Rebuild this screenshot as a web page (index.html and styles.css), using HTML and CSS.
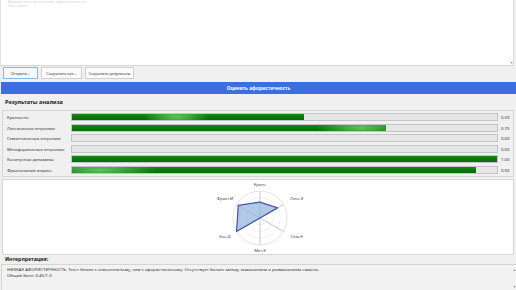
FILE: index.html
```html
<!DOCTYPE html>
<html lang="ru">
<head>
<meta charset="utf-8">
<title>Анализ афористичности</title>
<link rel="stylesheet" href="styles.css">
</head>
<body>
<div class="app">
  <div class="editor">
    <div class="editor-text">
      <p>Введите текст для анализа афористичности…</p>
      <p>Текст здесь</p>
    </div>
    <div class="vscroll"><span class="arrow">▾</span></div>
  </div>

  <div class="toolbar">
    <button class="btn btn-open focused">Открыть...</button>
    <button class="btn btn-saveas">Сохранить как...</button>
    <button class="btn btn-saveres">Сохранить результаты</button>
  </div>

  <button class="primary">Оценить афористичность</button>

  <div class="section-title results-title">Результаты анализа</div>

  <div class="metrics">
    <div class="label">Краткость:</div>
    <div class="track"><div class="fill" style="width:54.6%; --glow:45%"></div></div>
    <div class="value">0.59</div>

    <div class="label">Лексическая энтропия:</div>
    <div class="track"><div class="fill" style="width:73.8%; --glow:92%"></div></div>
    <div class="value">0.75</div>

    <div class="label">Семантическая энтропия:</div>
    <div class="track"><div class="fill" style="width:0%"></div></div>
    <div class="value">0.00</div>

    <div class="label">Метафорическая энтропия:</div>
    <div class="track"><div class="fill" style="width:0%"></div></div>
    <div class="value">0.00</div>

    <div class="label">Косинусная динамика:</div>
    <div class="track"><div class="fill" style="width:100%; --glow:-20%"></div></div>
    <div class="value">1.00</div>

    <div class="label">Фрактальный индекс:</div>
    <div class="track"><div class="fill" style="width:95%; --glow:7%"></div></div>
    <div class="value">0.93</div>
  </div>

  <div class="chart">
    <svg class="radar" width="510" height="74" viewBox="0 0 510 74">
      <g fill="none" stroke="#ececec" stroke-width="0.8">
        <circle cx="257" cy="38" r="6.75"/>
        <circle cx="257" cy="38" r="13.5"/>
        <circle cx="257" cy="38" r="20.25"/>
      </g>
      <circle cx="257" cy="38" r="27" fill="none" stroke="#e0e0e0" stroke-width="0.9"/>
      <g stroke="#c9c9c9" stroke-width="1">
        <line x1="257" y1="38" x2="257" y2="11"/>
        <line x1="257" y1="38" x2="280.38" y2="24.5"/>
        <line x1="257" y1="38" x2="280.38" y2="51.5"/>
        <line x1="257" y1="38" x2="257" y2="65"/>
        <line x1="257" y1="38" x2="233.62" y2="51.5"/>
        <line x1="257" y1="38" x2="233.62" y2="24.5"/>
      </g>
      <polygon points="257,22.07 274.54,27.88 257,38 257,38 233.62,51.5 235.25,25.44"
               fill="#8fb3de" fill-opacity="0.7" stroke="#4a58a6" stroke-width="1.3" stroke-linejoin="round"/>
      <g class="axis-label" text-anchor="middle" dominant-baseline="central">
        <text x="257" y="4">Кратк.</text>
        <text x="293.7" y="18">Лекс.Э</text>
        <text x="293.7" y="56.3">Сем.Э</text>
        <text x="257" y="70">Мет.Э</text>
        <text x="222" y="56.3">Кос.Д</text>
        <text x="222" y="18">Фракт.И</text>
      </g>
    </svg>
  </div>

  <div class="section-title interp-title">Интерпретация:</div>

  <div class="interp">
    <div class="interp-text">
      <p>НИЗКАЯ АФОРИСТИЧНОСТЬ. Текст ближе к описательному, чем к афористическому. Отсутствует баланс между замыканием и размыканием смысла.</p>
      <p>Общий балл: 0.45/1.0</p>
    </div>
    <div class="vscroll interp-scroll"><span class="arrow">▴</span><span class="arrow">▾</span></div>
  </div>
</div>
</body>
</html>
```

FILE: styles.css
```css
html, body {
  margin: 0;
  padding: 0;
}

body {
  width: 516px;
  height: 290px;
  overflow: hidden;
  background: #f0f0f0;
  font-family: "Noto Sans", "Open Sans", "DejaVu Sans", sans-serif;
  color: #1a1a1a;
}

.app {
  display: flex;
  flex-direction: column;
  width: 516px;
  height: 290px;
}

p { margin: 0; }

/* top text editor */
.editor {
  display: flex;
  height: 65px;
  background: #ffffff;
  border-left: 1px solid #e2e2e2;
  border-bottom: 1px solid #d4d4d4;
  margin-right: 2px;
  border-right: 1px solid #dcdcdc;
}

.editor-text {
  flex: 1;
  padding: 0 7px;
  font-size: 3.6px;
  line-height: 3.8px;
  color: #d2d2d2;
  overflow: hidden;
}

.vscroll {
  width: 3px;
  display: flex;
  flex-direction: column;
  justify-content: flex-end;
  align-items: center;
}

.arrow {
  font-size: 4px;
  line-height: 4px;
  color: #8a8a8a;
}

/* toolbar */
.toolbar {
  display: flex;
  gap: 3px;
  padding: 1px 3px 3px;
}

.btn {
  height: 12px;
  margin: 0;
  padding: 0;
  background: #fbfbfb;
  border: 1px solid #cfcfcf;
  border-radius: 0;
  font-family: inherit;
  font-size: 3.9px;
  color: #333;
  white-space: nowrap;
  text-align: center;
}

.btn-open { width: 35px; }
.btn-saveas { width: 41px; }
.btn-saveres { width: 49px; }

.btn.focused {
  background: #f4f9fe;
  border-color: #8ab8e6;
}

.primary {
  display: block;
  height: 12px;
  margin: 0 0 0 1px;
  padding: 0;
  border: none;
  background: #3d6de0;
  color: #ffffff;
  font-family: inherit;
  font-size: 4.8px;
  font-weight: 700;
  text-align: center;
}

.section-title {
  font-weight: 700;
  font-size: 5.6px;
  padding-left: 5px;
  color: #222;
}

.results-title {
  height: 16px;
  line-height: 17px;
}

/* metrics */
.metrics {
  margin: 0 2px;
  border: 1px solid #d6d6d6;
  padding: 2px 2px 2px 4px;
  display: grid;
  grid-template-columns: 64px 427px auto;
  column-gap: 0;
  row-gap: 2.6px;
  align-items: center;
  height: 61px;
  box-sizing: content-box;
}

.label {
  font-size: 4.3px;
  color: #333;
  white-space: nowrap;
}

.value {
  font-size: 4.3px;
  color: #333;
  padding-left: 3px;
}

.track {
  height: 8px;
  box-sizing: border-box;
  border: 1px solid #c4c4c4;
  background: #e6e6e6;
  overflow: hidden;
}

.fill {
  height: 100%;
  background:
    radial-gradient(ellipse 14% 160% at var(--glow, -50%) 50%, rgba(120, 220, 120, 0.75), rgba(120, 220, 120, 0) 100%),
    linear-gradient(#188818, #0c750c 55%, #0a6e0a);
}

/* chart */
.chart {
  margin: 2px 2px 0;
  height: 74px;
  background: #ffffff;
  border: 1px solid #d6d6d6;
}

.radar {
  display: block;
}

.axis-label {
  font-family: "Noto Sans", "Open Sans", sans-serif;
  font-size: 4.2px;
  fill: #444;
}

.interp-title {
  height: 9px;
  line-height: 9px;
  font-size: 5.2px;
}

/* interpretation */
.interp {
  flex: 1;
  display: flex;
  margin-left: 1px;
  border-top: 1px solid #d4d4d4;
  border-left: 1px solid #d4d4d4;
  background: #f2f2f2;
}

.interp-text {
  flex: 1;
  padding: 2px 5px;
  font-size: 4.3px;
  line-height: 5.5px;
  color: #333;
}

.interp-scroll {
  justify-content: space-between;
  padding: 3px 0 1px;
}
```
